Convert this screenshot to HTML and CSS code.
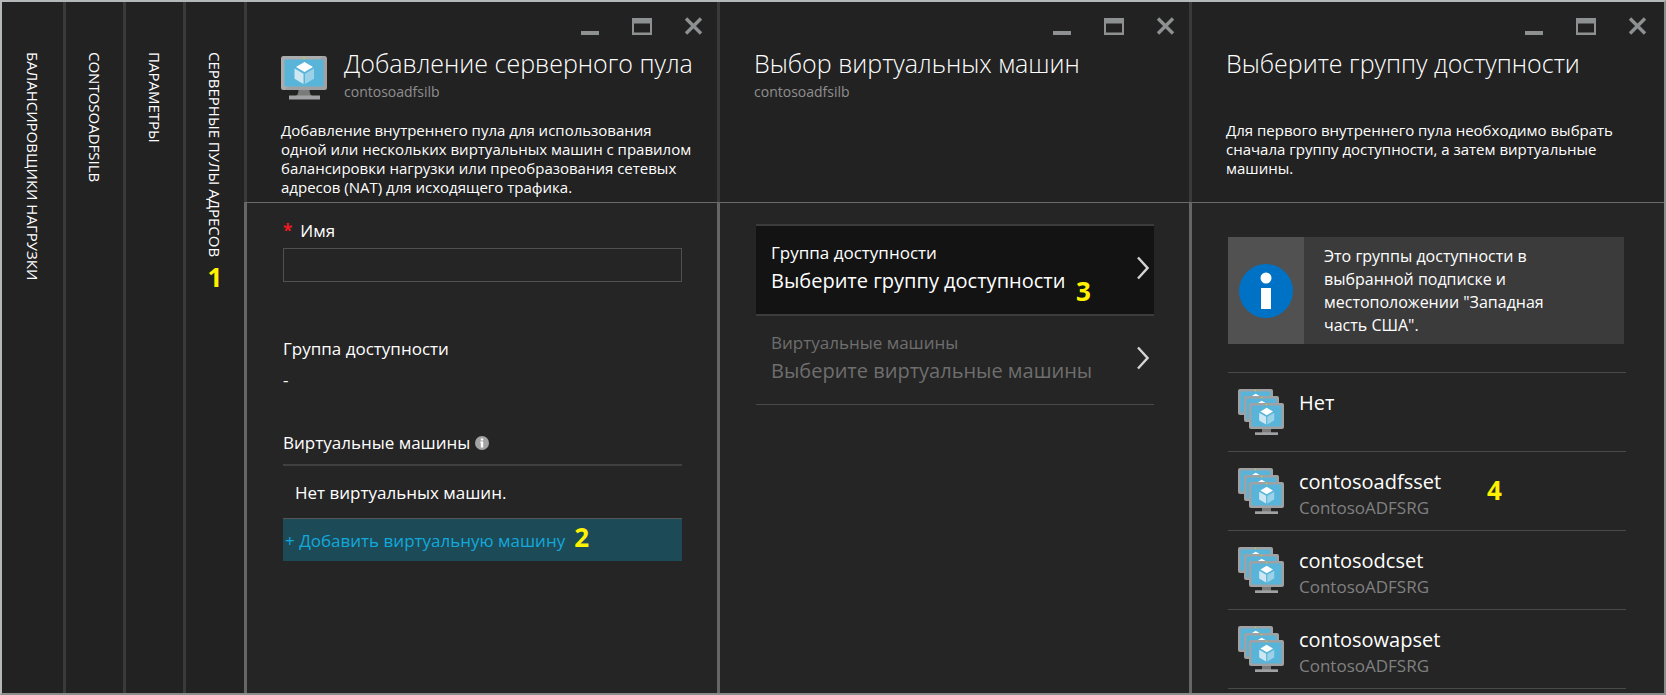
FILE: index.html
```html
<!DOCTYPE html>
<html lang="ru">
<head>
<meta charset="utf-8">
<title>Добавление серверного пула</title>
<link rel="stylesheet" href="styles.css">
</head>
<body>
<svg class="sprite" aria-hidden="true">
  <symbol id="monitor" viewBox="0 0 46 44">
    <path fill="#7a7a7a" d="M17.500 33h11c0 3.500.5 5.500 2.500 7H15c2-1.500 2.500-3.500 2.500-7z"/>
    <rect x="8" y="39.500" width="31" height="4" fill="#a0a1a2"/>
    <rect width="46" height="34" rx="2.500" fill="#a0a1a2"/>
    <path fill="#fff" opacity=".12" d="M2.500 0H42L3 34h-.5A2.500 2.500 0 0 1 0 31.500v-29A2.500 2.500 0 0 1 2.500 0z"/>
    <rect x="3.500" y="3.500" width="39" height="27" fill="#59b4d9"/>
    <circle cx="23" cy="2" r=".9" fill="#b8d432"/>
    <path fill="#fff" d="M23.500 6l8.500 5-8.500 5-8.500-5z"/>
    <path fill="#cde8f3" d="M13.500 12.500l9 5.300V28l-9-5.200z"/>
    <path fill="#9bd2e8" d="M33 12.500l-9 5.300V28l9-5.200z"/>
  </symbol>
  <symbol id="screen" viewBox="0 0 35 26">
    <rect width="35" height="26" rx="2" fill="#a0a1a2"/>
    <rect x="2.500" y="2.500" width="30" height="21" fill="#59b4d9"/>
    <circle cx="17.500" cy="1.500" r=".8" fill="#b8d432"/>
    <path fill="#fff" d="M17.700 4.800l6.300 3.800-6.300 3.700-6.300-3.700z"/>
    <path fill="#cde8f3" d="M10.200 9.700l6.900 4v7.700l-6.900-4z"/>
    <path fill="#9bd2e8" d="M25.200 9.700l-6.900 4v7.700l6.900-4z"/>
  </symbol>
  <symbol id="set" viewBox="0 0 46 46">
    <use href="#screen" width="35" height="26"/>
    <use href="#screen" x="6" y="7" width="35" height="26"/>
    <path fill="#7a7a7a" d="M24 39h9v5h-9z"/>
    <path fill="#a0a1a2" d="M17 43.300h23V46H17z"/>
    <use href="#screen" x="11" y="14" width="35" height="26"/>
  </symbol>
  <symbol id="min" viewBox="0 0 20 20"><path fill="#8d9191" d="M0 15h18v4H0z"/></symbol>
  <symbol id="max" viewBox="0 0 20 20"><path fill="#8d9191" fill-rule="evenodd" d="M0 2h20v17H0zM2 7.500v9h16v-9z"/></symbol>
  <symbol id="close" viewBox="0 0 20 20"><path stroke="#8d9191" stroke-width="3.400" d="M3 2.500l15 15M18 2.500l-15 15"/></symbol>
  <symbol id="chevron" viewBox="0 0 12 24"><path fill="none" stroke="#d4d4d4" stroke-width="2.400" d="M1 1.500L10.500 12 1 22.500"/></symbol>
</svg>

<div class="portal">
  <nav class="strips">
    <button class="strip" type="button"><span class="strip-text">БАЛАНСИРОВЩИКИ НАГРУЗКИ</span></button>
    <button class="strip" type="button"><span class="strip-text">CONTOSOADFSILB</span></button>
    <button class="strip" type="button"><span class="strip-text">ПАРАМЕТРЫ</span></button>
    <button class="strip" type="button"><span class="strip-text">СЕРВЕРНЫЕ ПУЛЫ АДРЕСОВ</span><span class="step">1</span></button>
  </nav>

  <main class="blades">
    <section class="blade">
      <header class="blade-head">
        <div class="controls">
          <button type="button" aria-label="Свернуть"><svg><use href="#min"/></svg></button>
          <button type="button" aria-label="Развернуть"><svg><use href="#max"/></svg></button>
          <button type="button" aria-label="Закрыть"><svg><use href="#close"/></svg></button>
        </div>
        <div class="heading">
          <svg class="heading-icon" aria-hidden="true"><use href="#monitor"/></svg>
          <div>
            <h1>Добавление серверного пула</h1>
            <p class="resource">contosoadfsilb</p>
          </div>
        </div>
        <p class="about">Добавление внутреннего пула для использования одной или нескольких виртуальных машин с правилом балансировки нагрузки или преобразования сетевых адресов (NAT) для исходящего трафика.</p>
      </header>
      <div class="blade-body form">
        <label class="field-label" for="name"><span class="required">*</span>Имя</label>
        <input class="field" id="name" type="text">
        <div class="group">
          <p>Группа доступности</p>
          <p class="group-value">-</p>
        </div>
        <p class="machines">Виртуальные машины
          <svg class="hint" viewBox="0 0 14 14" aria-hidden="true"><circle cx="7" cy="7" r="7" fill="#a3a3a3"/><path fill="#fff" d="M5.800 2.600h2.400v2H5.800zM5.300 5.600h2.900v5.800H5.800V7h-.5z"/></svg>
        </p>
        <p class="empty">Нет виртуальных машин.</p>
        <button class="add" type="button">+ Добавить виртуальную машину<span class="step">2</span></button>
      </div>
    </section>

    <section class="blade">
      <header class="blade-head">
        <div class="controls">
          <button type="button" aria-label="Свернуть"><svg><use href="#min"/></svg></button>
          <button type="button" aria-label="Развернуть"><svg><use href="#max"/></svg></button>
          <button type="button" aria-label="Закрыть"><svg><use href="#close"/></svg></button>
        </div>
        <div class="heading">
          <div>
            <h1>Выбор виртуальных машин</h1>
            <p class="resource">contosoadfsilb</p>
          </div>
        </div>
      </header>
      <div class="blade-body picker">
        <button class="option selected" type="button">
          <span class="option-text"><span class="option-label">Группа доступности</span><span class="option-value">Выберите группу доступности</span></span>
          <svg class="chevron" aria-hidden="true"><use href="#chevron"/></svg>
          <span class="step step-three">3</span>
        </button>
        <button class="option" type="button" disabled>
          <span class="option-text"><span class="option-label">Виртуальные машины</span><span class="option-value">Выберите виртуальные машины</span></span>
          <svg class="chevron" aria-hidden="true"><use href="#chevron"/></svg>
        </button>
      </div>
    </section>

    <section class="blade">
      <header class="blade-head">
        <div class="controls">
          <button type="button" aria-label="Свернуть"><svg><use href="#min"/></svg></button>
          <button type="button" aria-label="Развернуть"><svg><use href="#max"/></svg></button>
          <button type="button" aria-label="Закрыть"><svg><use href="#close"/></svg></button>
        </div>
        <div class="heading"><h1>Выберите группу доступности</h1></div>
        <p class="about">Для первого внутреннего пула необходимо выбрать сначала группу доступности, а затем виртуальные машины.</p>
      </header>
      <div class="blade-body sets">
        <div class="notice">
          <div class="notice-icon">
            <svg viewBox="0 0 54 54" aria-hidden="true"><circle cx="27" cy="27" r="27" fill="#0072c6"/><circle cx="27" cy="14" r="5.500" fill="#fff"/><path fill="#fff" d="M22 24h10v21H22z"/></svg>
          </div>
          <p class="notice-text">Это группы доступности в выбранной подписке и местоположении "Западная часть США".</p>
        </div>
        <div class="set-list">
          <button class="set" type="button"><svg aria-hidden="true"><use href="#set"/></svg><span><span class="set-name">Нет</span></span></button>
          <button class="set" type="button"><svg aria-hidden="true"><use href="#set"/></svg><span><span class="set-name">contosoadfsset</span><span class="set-group">ContosoADFSRG</span></span><span class="step step-four">4</span></button>
          <button class="set" type="button"><svg aria-hidden="true"><use href="#set"/></svg><span><span class="set-name">contosodcset</span><span class="set-group">ContosoADFSRG</span></span></button>
          <button class="set" type="button"><svg aria-hidden="true"><use href="#set"/></svg><span><span class="set-name">contosowapset</span><span class="set-group">ContosoADFSRG</span></span></button>
        </div>
      </div>
    </section>
  </main>
</div>
</body>
</html>
```
FILE: styles.css
```css
* { box-sizing: border-box; }

body {
  margin: 0;
  background: #252525;
  color: #fff;
  font: 17px/24px "Open Sans", "Noto Sans", sans-serif;
}

h1, p { margin: 0; }

button {
  padding: 0;
  border: 0;
  background: none;
  color: inherit;
  font: inherit;
  text-align: left;
}

.sprite { position: absolute; width: 0; height: 0; }

.portal {
  display: flex;
  min-height: 100vh;
  border: 2px solid #b4b8b8;
  border-right-color: #8c8c8c;
  border-bottom-color: #8c8c8c;
}

.step {
  color: #fff200;
  font-size: 26px;
  font-weight: 700;
  line-height: 24px;
}

/* Collapsed blades */
.strips { display: flex; }

.strip {
  display: flex;
  flex-direction: column;
  align-items: center;
  gap: 8px;
  width: 60px;
  padding: 50px 0 0;
  border-right: 3px solid #3a3a3a;
  background: #222;
}

.strip:first-child { width: 64px; }
.strip:last-child { width: 58px; border-right: 0; }

.strip-text {
  writing-mode: vertical-rl;
  font-size: 15px;
  font-weight: 500;
  line-height: 18px;
  white-space: nowrap;
}

/* Open blades */
.blades {
  display: grid;
  flex: 1;
  grid-template-columns: 473fr 472fr 475fr;
}

.blade { display: flex; flex-direction: column; min-width: 0; }

.blade-head {
  min-height: 200px;
  padding: 14px 14px 5px 34px;
  border-left: 3px solid #3a3a3a;
  background: #222;
}

.blade:last-child .blade-head { padding-right: 17px; }

.blade-body {
  flex: 1;
  padding: 0 35px 0 36px;
  border-left: 3px solid #666;
  box-shadow: inset 0 1px #6a6a6a;
}

.controls { display: flex; justify-content: flex-end; gap: 31px; height: 30px; }
.controls button { width: 20px; height: 20px; }
.controls svg { display: block; width: 20px; height: 20px; }

.heading { display: flex; gap: 17px; min-height: 56px; }
.heading-icon { width: 46px; height: 44px; margin-top: 10px; }

h1 {
  font-size: 25px;
  font-weight: 300;
  line-height: 34px;
  white-space: nowrap;
}

.resource {
  margin-top: 2px;
  color: #8f8f8f;
  font-size: 14px;
  font-weight: 500;
  line-height: 20px;
}

.about {
  margin-top: 19px;
  max-width: 416px;
  font-size: 15px;
  line-height: 19px;
}

/* Pool form */
.form { display: flex; flex-direction: column; padding-top: 17px; }
.required { margin-right: 8px; color: #ed1c24; font-weight: 700; }

.field {
  height: 34px;
  margin-top: 5px;
  padding: 0 8px;
  border: 1px solid #505050;
  background: #252525;
  color: #fff;
  font: inherit;
}

.group { margin-top: 55px; }
.group-value { margin-top: 7px; }

.machines {
  display: flex;
  align-items: center;
  gap: 5px;
  margin-top: 39px;
  padding-bottom: 9px;
  border-bottom: 2px solid #404040;
}

.hint { width: 14px; height: 14px; }
.empty { padding: 15px 12px 13px; }

.add {
  display: flex;
  align-items: baseline;
  gap: 9px;
  height: 43px;
  padding: 6px 0 0 2px;
  border-top: 1px solid #555;
  background: #1c4b57;
  color: #13a8dc;
}

/* Pickers */
.picker { padding-top: 22px; }

.option {
  position: relative;
  display: flex;
  align-items: center;
  justify-content: space-between;
  width: 100%;
  padding: 15px 5px 19px 15px;
  border-top: 2px solid #3c3c3c;
}

.option:last-child { border-bottom: 1px solid #4a4a4a; }
.option.selected { background: #131313; }
.option:disabled { color: #6e6e6e; }
.option-label, .option-value { display: block; }
.option-value { margin-top: 2px; font-size: 20px; line-height: 28px; }
.chevron { width: 12px; height: 24px; }
.step-three { position: absolute; left: 320px; bottom: 11px; }

/* Availability sets */
.sets { padding: 35px 38px 0 36px; }
.notice { display: flex; margin-right: 2px; background: #3b3b3b; }

.notice-icon {
  display: flex;
  align-items: center;
  justify-content: center;
  width: 76px;
  background: #515151;
}

.notice-icon svg { width: 54px; height: 54px; }

.notice-text {
  flex: 1;
  padding: 8px 56px 7px 20px;
  font-size: 16px;
  line-height: 23px;
}

.set-list { margin-top: 28px; border-bottom: 1px solid #4a4a4a; }

.set {
  position: relative;
  display: flex;
  align-items: flex-start;
  gap: 15px;
  width: 100%;
  min-height: 79px;
  padding: 16px 10px 8px;
  border-top: 1px solid #4a4a4a;
}

.set svg { width: 46px; height: 46px; }
.set-name, .set-group { display: block; }
.set-name { font-size: 20px; line-height: 28px; }
.set-group { color: #808080; }
.step-four { position: absolute; left: 259px; top: 26px; }
```
